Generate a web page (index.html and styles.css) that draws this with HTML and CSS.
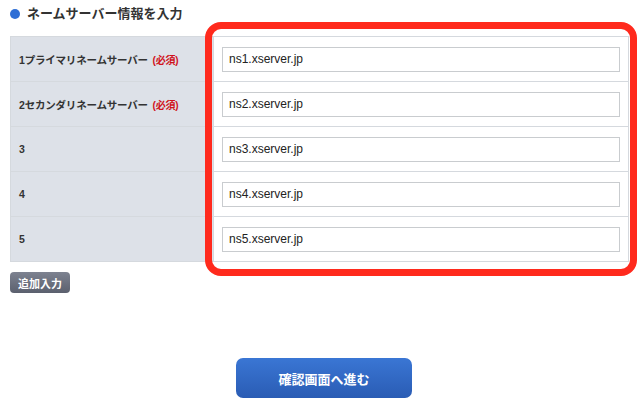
FILE: index.html
```html
<!DOCTYPE html>
<html lang="ja">
<head>
<meta charset="utf-8">
<link rel="stylesheet" href="styles.css">
</head>
<body>
<div class="page">
  <h2 class="heading"><span class="dot"></span>ネームサーバー情報を入力</h2>
  <div class="form-area">
    <table class="ns-table">
      <tr>
        <th>1プライマリネームサーバー <span class="req">(必須)</span></th>
        <td><div class="field">ns1.xserver.jp</div></td>
      </tr>
      <tr>
        <th>2セカンダリネームサーバー <span class="req">(必須)</span></th>
        <td><div class="field">ns2.xserver.jp</div></td>
      </tr>
      <tr>
        <th>3</th>
        <td><div class="field">ns3.xserver.jp</div></td>
      </tr>
      <tr>
        <th>4</th>
        <td><div class="field">ns4.xserver.jp</div></td>
      </tr>
      <tr>
        <th>5</th>
        <td><div class="field">ns5.xserver.jp</div></td>
      </tr>
    </table>
    <div class="highlight"></div>
  </div>
  <button class="add-btn">追加入力</button>
  <div class="submit-row">
    <button class="submit-btn">確認画面へ進む</button>
  </div>
</div>
</body>
</html>
```
FILE: styles.css
```css
html, body {
  margin: 0;
  padding: 0;
  background: #ffffff;
}
body {
  font-family: "Liberation Sans", "Noto Sans CJK JP", sans-serif;
  color: #333333;
}
.page {
  width: 640px;
  height: 412px;
  overflow: hidden;
}
.heading {
  margin: 0;
  height: 36px;
  display: flex;
  align-items: flex-start;
  padding: 6px 0 0 10px;
  box-sizing: border-box;
  font-size: 13px;
  line-height: 16px;
  font-weight: bold;
  color: #333333;
}
.dot {
  width: 10px;
  height: 10px;
  border-radius: 50%;
  background: #2f6fd6;
  margin: 3px 7px 0 0;
  flex: none;
}
.form-area {
  position: relative;
  margin-left: 10px;
  width: 619px;
}
.ns-table {
  border-collapse: collapse;
  width: 619px;
}
.ns-table th,
.ns-table td {
  border: 1px solid #d5d9de;
  height: 45px;
  padding: 0;
  box-sizing: border-box;
}
.ns-table th {
  width: 203px;
  background: #dde1e8;
  text-align: left;
  padding-left: 8px;
  font-size: 10.5px;
  letter-spacing: -0.2px;
  font-weight: bold;
  color: #333333;
}
.ns-table td {
  background: #ffffff;
  padding: 0 8px;
}
.req {
  color: #d0121b;
  font-size: 10px;
  margin-left: 2px;
}
.field {
  height: 25px;
  border: 1px solid #c9cccf;
  box-sizing: border-box;
  padding-left: 6px;
  font-size: 12px;
  line-height: 23px;
  color: #222222;
  background: #fff;
}
.highlight {
  position: absolute;
  left: 195px;
  top: -14px;
  width: 432px;
  height: 254px;
  border: 7px solid #ff2a1d;
  border-radius: 16px;
  box-sizing: border-box;
}
.add-btn {
  display: block;
  margin: 10px 0 0 10px;
  width: 60px;
  height: 21px;
  padding: 0;
  border: none;
  border-radius: 4px;
  background: linear-gradient(#7d8290, #5b606e);
  color: #ffffff;
  font-family: "Liberation Sans", "Noto Sans CJK JP", sans-serif;
  font-size: 11px;
  font-weight: bold;
}
.submit-row {
  display: flex;
  justify-content: center;
  padding-left: 8px;
  margin-top: 65px;
}
.submit-btn {
  width: 176px;
  height: 40px;
  border: none;
  border-radius: 7px;
  background: linear-gradient(#3a76d4, #2a5cb4);
  color: #ffffff;
  font-family: "Liberation Sans", "Noto Sans CJK JP", sans-serif;
  font-size: 13px;
  font-weight: bold;
  padding: 0;
}
```
